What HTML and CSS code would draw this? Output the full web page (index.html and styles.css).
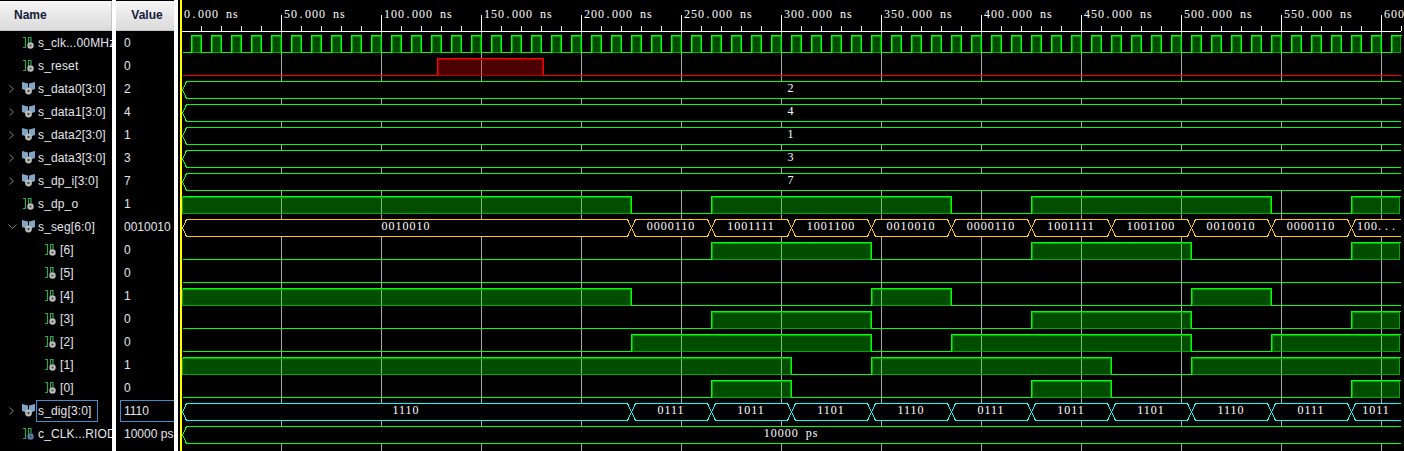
FILE: index.html
```html
<!DOCTYPE html>
<html>
<head>
    <title>Simulation waveform</title>
    <link rel="stylesheet" href="styles.css">
</head>
<body>

<svg class="defs" width="0" height="0">
    <symbol id="ico-bit" viewBox="0 0 12 12">
        <path class="ico-step" d="M0 .5 H2.5 V10.5 H0 M5.5 7 V.5 H8 V5"/>
        <circle class="ico-gear" cx="7.5" cy="8.5" r="3.2"/>
        <circle class="ico-hole" cx="7.5" cy="8.5" r="1.1"/>
    </symbol>
    <symbol id="ico-param" viewBox="0 0 12 12">
        <path class="ico-step" d="M0 .5 H2.5 V10.5 H0 M5.5 7 V.5 H8 V5"/>
        <circle class="ico-gear-blue" cx="7.5" cy="8.5" r="3.2"/>
        <circle class="ico-hole" cx="7.5" cy="8.5" r="1.1"/>
    </symbol>
    <symbol id="ico-bus" viewBox="0 0 13 13">
        <path class="ico-block" d="M0 0 L6 1.5 V9 L0 7 Z M13 0 L7 1.5 V9 L13 7 Z"/>
        <circle class="ico-gear" cx="6.5" cy="9" r="3.4"/>
        <circle class="ico-hole" cx="6.5" cy="9" r="1.2"/>
    </symbol>
    <symbol id="ico-open" viewBox="0 0 8 8"><path class="ico-chev" d="M1.5 .5 L5.5 4 L1.5 7.5"/></symbol>
    <symbol id="ico-close" viewBox="0 0 9 6"><path class="ico-chev" d="M.5 .5 L4.5 4.5 L8.5 .5"/></symbol>
</svg>

<div class="app">
    <div class="col col-names">
        <div class="col-head head-name">Name</div>
        <div class="row"><span class="chev"></span><svg class="ico"><use href="#ico-bit"/></svg><span class="lbl">s_clk...00MHz</span></div>
        <div class="row"><span class="chev"></span><svg class="ico"><use href="#ico-bit"/></svg><span class="lbl">s_reset</span></div>
        <div class="row"><span class="chev"><svg class="chev-r"><use href="#ico-open"/></svg></span><svg class="ico ico-wide"><use href="#ico-bus"/></svg><span class="lbl">s_data0[3:0]</span></div>
        <div class="row"><span class="chev"><svg class="chev-r"><use href="#ico-open"/></svg></span><svg class="ico ico-wide"><use href="#ico-bus"/></svg><span class="lbl">s_data1[3:0]</span></div>
        <div class="row"><span class="chev"><svg class="chev-r"><use href="#ico-open"/></svg></span><svg class="ico ico-wide"><use href="#ico-bus"/></svg><span class="lbl">s_data2[3:0]</span></div>
        <div class="row"><span class="chev"><svg class="chev-r"><use href="#ico-open"/></svg></span><svg class="ico ico-wide"><use href="#ico-bus"/></svg><span class="lbl">s_data3[3:0]</span></div>
        <div class="row"><span class="chev"><svg class="chev-r"><use href="#ico-open"/></svg></span><svg class="ico ico-wide"><use href="#ico-bus"/></svg><span class="lbl">s_dp_i[3:0]</span></div>
        <div class="row"><span class="chev"></span><svg class="ico"><use href="#ico-bit"/></svg><span class="lbl">s_dp_o</span></div>
        <div class="row"><span class="chev"><svg class="chev-d"><use href="#ico-close"/></svg></span><svg class="ico ico-wide"><use href="#ico-bus"/></svg><span class="lbl">s_seg[6:0]</span></div>
        <div class="row child"><span class="chev"></span><svg class="ico"><use href="#ico-bit"/></svg><span class="lbl">[6]</span></div>
        <div class="row child"><span class="chev"></span><svg class="ico"><use href="#ico-bit"/></svg><span class="lbl">[5]</span></div>
        <div class="row child"><span class="chev"></span><svg class="ico"><use href="#ico-bit"/></svg><span class="lbl">[4]</span></div>
        <div class="row child"><span class="chev"></span><svg class="ico"><use href="#ico-bit"/></svg><span class="lbl">[3]</span></div>
        <div class="row child"><span class="chev"></span><svg class="ico"><use href="#ico-bit"/></svg><span class="lbl">[2]</span></div>
        <div class="row child"><span class="chev"></span><svg class="ico"><use href="#ico-bit"/></svg><span class="lbl">[1]</span></div>
        <div class="row child"><span class="chev"></span><svg class="ico"><use href="#ico-bit"/></svg><span class="lbl">[0]</span></div>
        <div class="row"><span class="chev"><svg class="chev-r"><use href="#ico-open"/></svg></span><svg class="ico ico-wide"><use href="#ico-bus"/></svg><span class="lbl selected">s_dig[3:0]</span></div>
        <div class="row"><span class="chev"></span><svg class="ico"><use href="#ico-param"/></svg><span class="lbl">c_CLK...RIOD</span></div>
    </div>

    <div class="col col-values">
        <div class="col-head head-value">Value</div>
        <div class="row val">0</div>
        <div class="row val">0</div>
        <div class="row val">2</div>
        <div class="row val">4</div>
        <div class="row val">1</div>
        <div class="row val">3</div>
        <div class="row val">7</div>
        <div class="row val">1</div>
        <div class="row val">0010010</div>
        <div class="row val">0</div>
        <div class="row val">0</div>
        <div class="row val">1</div>
        <div class="row val">0</div>
        <div class="row val">0</div>
        <div class="row val">1</div>
        <div class="row val">0</div>
        <div class="row val"><span class="val-selected">1110</span></div>
        <div class="row val">10000 ps</div>
    </div>

    <svg class="wave" viewBox="178 0 1226 451" width="1226" height="451">
        <defs>
            <path id="bus-long" d="M1401 .5 H186.5 L182.5 9 L186.5 17.5 H1401"/>
            <g id="bus-hexes">
                <polygon points="182.5,9 186.5,.5 627.5,.5 631.5,9 627.5,17.5 186.5,17.5"/>
                <polygon points="631.5,9 635.5,.5 707.5,.5 711.5,9 707.5,17.5 635.5,17.5"/>
                <polygon points="711.5,9 715.5,.5 787.5,.5 791.5,9 787.5,17.5 715.5,17.5"/>
                <polygon points="791.5,9 795.5,.5 867.5,.5 871.5,9 867.5,17.5 795.5,17.5"/>
                <polygon points="871.5,9 875.5,.5 947.5,.5 951.5,9 947.5,17.5 875.5,17.5"/>
                <polygon points="951.5,9 955.5,.5 1027.5,.5 1031.5,9 1027.5,17.5 955.5,17.5"/>
                <polygon points="1031.5,9 1035.5,.5 1107.5,.5 1111.5,9 1107.5,17.5 1035.5,17.5"/>
                <polygon points="1111.5,9 1115.5,.5 1187.5,.5 1191.5,9 1187.5,17.5 1115.5,17.5"/>
                <polygon points="1191.5,9 1195.5,.5 1267.5,.5 1271.5,9 1267.5,17.5 1195.5,17.5"/>
                <polygon points="1271.5,9 1275.5,.5 1347.5,.5 1351.5,9 1347.5,17.5 1275.5,17.5"/>
                <path d="M1401 .5 H1355.5 L1351.5 9 L1355.5 17.5 H1401"/>
            </g>
        </defs>

        <!-- grid -->
        <path class="grid" d="M281.5 31 V451 M381.5 31 V451 M481.5 31 V451 M581.5 31 V451 M681.5 31 V451 M781.5 31 V451 M881.5 31 V451 M981.5 31 V451 M1081.5 31 V451 M1181.5 31 V451 M1281.5 31 V451 M1381.5 31 V451"/>

        <!-- time axis -->
        <path class="axis" d="M182 31.5 H1401 M281.5 15 V31 M381.5 15 V31 M481.5 15 V31 M581.5 15 V31 M681.5 15 V31 M781.5 15 V31 M881.5 15 V31 M981.5 15 V31 M1081.5 15 V31 M1181.5 15 V31 M1281.5 15 V31 M1381.5 15 V31"/>
        <path class="axis" d="M201.5 26 V31 M221.5 26 V31 M241.5 26 V31 M261.5 26 V31 M301.5 26 V31 M321.5 26 V31 M341.5 26 V31 M361.5 26 V31 M401.5 26 V31 M421.5 26 V31 M441.5 26 V31 M461.5 26 V31 M501.5 26 V31 M521.5 26 V31 M541.5 26 V31 M561.5 26 V31 M601.5 26 V31 M621.5 26 V31 M641.5 26 V31 M661.5 26 V31 M701.5 26 V31 M721.5 26 V31 M741.5 26 V31 M761.5 26 V31 M801.5 26 V31 M821.5 26 V31 M841.5 26 V31 M861.5 26 V31 M901.5 26 V31 M921.5 26 V31 M941.5 26 V31 M961.5 26 V31 M1001.5 26 V31 M1021.5 26 V31 M1041.5 26 V31 M1061.5 26 V31 M1101.5 26 V31 M1121.5 26 V31 M1141.5 26 V31 M1161.5 26 V31 M1201.5 26 V31 M1221.5 26 V31 M1241.5 26 V31 M1261.5 26 V31 M1301.5 26 V31 M1321.5 26 V31 M1341.5 26 V31 M1361.5 26 V31 M1401.5 26 V31"/>
        <g class="time">
            <text x="184" y="18">0<tspan class="dot" dx="1.5">.</tspan>000 ns</text>
            <text x="284" y="18">50<tspan class="dot" dx="1.5">.</tspan>000 ns</text>
            <text x="384" y="18">100<tspan class="dot" dx="1.5">.</tspan>000 ns</text>
            <text x="484" y="18">150<tspan class="dot" dx="1.5">.</tspan>000 ns</text>
            <text x="584" y="18">200<tspan class="dot" dx="1.5">.</tspan>000 ns</text>
            <text x="684" y="18">250<tspan class="dot" dx="1.5">.</tspan>000 ns</text>
            <text x="784" y="18">300<tspan class="dot" dx="1.5">.</tspan>000 ns</text>
            <text x="884" y="18">350<tspan class="dot" dx="1.5">.</tspan>000 ns</text>
            <text x="984" y="18">400<tspan class="dot" dx="1.5">.</tspan>000 ns</text>
            <text x="1084" y="18">450<tspan class="dot" dx="1.5">.</tspan>000 ns</text>
            <text x="1184" y="18">500<tspan class="dot" dx="1.5">.</tspan>000 ns</text>
            <text x="1284" y="18">550<tspan class="dot" dx="1.5">.</tspan>000 ns</text>
            <text x="1384" y="18">600<tspan class="dot" dx="1.5">.</tspan>000 ns</text>
        </g>

        <!-- s_clk -->
        <path class="high" d="M192.5 36.5 h8 v16 h-8 z
            m20 0 h8 v16 h-8 z m20 0 h8 v16 h-8 z m20 0 h8 v16 h-8 z m20 0 h8 v16 h-8 z m20 0 h8 v16 h-8 z
            m20 0 h8 v16 h-8 z m20 0 h8 v16 h-8 z m20 0 h8 v16 h-8 z m20 0 h8 v16 h-8 z m20 0 h8 v16 h-8 z
            m20 0 h8 v16 h-8 z m20 0 h8 v16 h-8 z m20 0 h8 v16 h-8 z m20 0 h8 v16 h-8 z m20 0 h8 v16 h-8 z
            m20 0 h8 v16 h-8 z m20 0 h8 v16 h-8 z m20 0 h8 v16 h-8 z m20 0 h8 v16 h-8 z m20 0 h8 v16 h-8 z
            m20 0 h8 v16 h-8 z m20 0 h8 v16 h-8 z m20 0 h8 v16 h-8 z m20 0 h8 v16 h-8 z m20 0 h8 v16 h-8 z
            m20 0 h8 v16 h-8 z m20 0 h8 v16 h-8 z m20 0 h8 v16 h-8 z m20 0 h8 v16 h-8 z m20 0 h8 v16 h-8 z
            m20 0 h8 v16 h-8 z m20 0 h8 v16 h-8 z m20 0 h8 v16 h-8 z m20 0 h8 v16 h-8 z m20 0 h8 v16 h-8 z
            m20 0 h8 v16 h-8 z m20 0 h8 v16 h-8 z m20 0 h8 v16 h-8 z m20 0 h8 v16 h-8 z m20 0 h8 v16 h-8 z
            m20 0 h8 v16 h-8 z m20 0 h8 v16 h-8 z m20 0 h8 v16 h-8 z m20 0 h8 v16 h-8 z m20 0 h8 v16 h-8 z
            m20 0 h8 v16 h-8 z m20 0 h8 v16 h-8 z m20 0 h8 v16 h-8 z m20 0 h8 v16 h-8 z m20 0 h8 v16 h-8 z
            m20 0 h8 v16 h-8 z m20 0 h8 v16 h-8 z m20 0 h8 v16 h-8 z m20 0 h8 v16 h-8 z m20 0 h8 v16 h-8 z
            m20 0 h8 v16 h-8 z m20 0 h8 v16 h-8 z m20 0 h8 v16 h-8 z m20 0 h8 v16 h-8 z m20 0 h8 v16 h-8 z"/>
        <path class="line" d="M182.5 52.5 h9
            v-17 h10 v17 h10 v-17 h10 v17 h10 v-17 h10 v17 h10 v-17 h10 v17 h10 v-17 h10 v17 h10
            v-17 h10 v17 h10 v-17 h10 v17 h10 v-17 h10 v17 h10 v-17 h10 v17 h10 v-17 h10 v17 h10
            v-17 h10 v17 h10 v-17 h10 v17 h10 v-17 h10 v17 h10 v-17 h10 v17 h10 v-17 h10 v17 h10
            v-17 h10 v17 h10 v-17 h10 v17 h10 v-17 h10 v17 h10 v-17 h10 v17 h10 v-17 h10 v17 h10
            v-17 h10 v17 h10 v-17 h10 v17 h10 v-17 h10 v17 h10 v-17 h10 v17 h10 v-17 h10 v17 h10
            v-17 h10 v17 h10 v-17 h10 v17 h10 v-17 h10 v17 h10 v-17 h10 v17 h10 v-17 h10 v17 h10
            v-17 h10 v17 h10 v-17 h10 v17 h10 v-17 h10 v17 h10 v-17 h10 v17 h10 v-17 h10 v17 h10
            v-17 h10 v17 h10 v-17 h10 v17 h10 v-17 h10 v17 h10 v-17 h10 v17 h10 v-17 h10 v17 h10
            v-17 h10 v17 h10 v-17 h10 v17 h10 v-17 h10 v17 h10 v-17 h10 v17 h10 v-17 h10 v17 h10
            v-17 h10 v17 h10 v-17 h10 v17 h10 v-17 h10 v17 h10 v-17 h10 v17 h10 v-17 h10 v17 h10
            v-17 h10 v17 h10 v-17 h10 v17 h10 v-17 h10 v17 h10 v-17 h10 v17 h10 v-17 h10 v17 h10
            v-17 h10 v17 h10 v-17 h10 v17 h10 v-17 h10 v17 h10 v-17 h10 v17 h10 v-17 h10 v17 h10
            v-17 h10"/>

        <!-- s_reset -->
        <g class="red" transform="translate(0,58)">
            <rect class="high" x="438.5" y="1.5" width="104" height="16"/>
            <path class="line" d="M182.5 17.5 H437.5 V.5 H543.5 V17.5 H1401"/>
        </g>

        <!-- constant buses -->
        <g class="bus" transform="translate(0,81)"><use href="#bus-long"/><text x="791" y="11">2</text></g>
        <g class="bus" transform="translate(0,104)"><use href="#bus-long"/><text x="791" y="11">4</text></g>
        <g class="bus" transform="translate(0,127)"><use href="#bus-long"/><text x="791" y="11">1</text></g>
        <g class="bus" transform="translate(0,150)"><use href="#bus-long"/><text x="791" y="11">3</text></g>
        <g class="bus" transform="translate(0,173)"><use href="#bus-long"/><text x="791" y="11">7</text></g>

        <!-- s_dp_o -->
        <g transform="translate(0,196)">
            <rect class="high" x="182.5" y="1.5" width="448" height="16"/>
            <rect class="high" x="712.5" y="1.5" width="238" height="16"/>
            <rect class="high" x="1032.5" y="1.5" width="238" height="16"/>
            <rect class="high" x="1352.5" y="1.5" width="47" height="16"/>
            <path class="line" d="M182.5 .5 H631.5 V17.5 H711.5 V.5 H951.5 V17.5 H1031.5 V.5 H1271.5 V17.5 H1351.5 V.5 H1401"/>
        </g>

        <!-- s_seg -->
        <g class="bus bus-seg" transform="translate(0,219)">
            <use href="#bus-hexes"/>
            <text x="406" y="11">0010010</text>
            <text x="671" y="11">0000110</text>
            <text x="751" y="11">1001111</text>
            <text x="831" y="11">1001100</text>
            <text x="911" y="11">0010010</text>
            <text x="991" y="11">0000110</text>
            <text x="1071" y="11">1001111</text>
            <text x="1151" y="11">1001100</text>
            <text x="1231" y="11">0010010</text>
            <text x="1311" y="11">0000110</text>
            <text x="1378" y="11">100<tspan class="dot">...</tspan></text>
        </g>

        <!-- s_seg bits -->
        <g transform="translate(0,242)">
            <rect class="high" x="712.5" y="1.5" width="158" height="16"/>
            <rect class="high" x="1032.5" y="1.5" width="158" height="16"/>
            <rect class="high" x="1352.5" y="1.5" width="47" height="16"/>
            <path class="line" d="M182.5 17.5 H711.5 V.5 H871.5 V17.5 H1031.5 V.5 H1191.5 V17.5 H1351.5 V.5 H1401"/>
        </g>
        <g transform="translate(0,265)">
            <path class="line" d="M182.5 17.5 H1401"/>
        </g>
        <g transform="translate(0,288)">
            <rect class="high" x="182.5" y="1.5" width="448" height="16"/>
            <rect class="high" x="872.5" y="1.5" width="78" height="16"/>
            <rect class="high" x="1192.5" y="1.5" width="78" height="16"/>
            <path class="line" d="M182.5 .5 H631.5 V17.5 H871.5 V.5 H951.5 V17.5 H1191.5 V.5 H1271.5 V17.5 H1401"/>
        </g>
        <g transform="translate(0,311)">
            <rect class="high" x="712.5" y="1.5" width="158" height="16"/>
            <rect class="high" x="1032.5" y="1.5" width="158" height="16"/>
            <rect class="high" x="1352.5" y="1.5" width="47" height="16"/>
            <path class="line" d="M182.5 17.5 H711.5 V.5 H871.5 V17.5 H1031.5 V.5 H1191.5 V17.5 H1351.5 V.5 H1401"/>
        </g>
        <g transform="translate(0,334)">
            <rect class="high" x="632.5" y="1.5" width="238" height="16"/>
            <rect class="high" x="952.5" y="1.5" width="238" height="16"/>
            <rect class="high" x="1272.5" y="1.5" width="127" height="16"/>
            <path class="line" d="M182.5 17.5 H631.5 V.5 H871.5 V17.5 H951.5 V.5 H1191.5 V17.5 H1271.5 V.5 H1401"/>
        </g>
        <g transform="translate(0,357)">
            <rect class="high" x="182.5" y="1.5" width="608" height="16"/>
            <rect class="high" x="872.5" y="1.5" width="238" height="16"/>
            <rect class="high" x="1192.5" y="1.5" width="207" height="16"/>
            <path class="line" d="M182.5 .5 H791.5 V17.5 H871.5 V.5 H1111.5 V17.5 H1191.5 V.5 H1401"/>
        </g>
        <g transform="translate(0,380)">
            <rect class="high" x="712.5" y="1.5" width="78" height="16"/>
            <rect class="high" x="1032.5" y="1.5" width="78" height="16"/>
            <rect class="high" x="1352.5" y="1.5" width="47" height="16"/>
            <path class="line" d="M182.5 17.5 H711.5 V.5 H791.5 V17.5 H1031.5 V.5 H1111.5 V17.5 H1351.5 V.5 H1401"/>
        </g>

        <!-- s_dig -->
        <g class="bus bus-dig" transform="translate(0,403)">
            <use href="#bus-hexes"/>
            <text x="406" y="11">1110</text>
            <text x="671" y="11">0111</text>
            <text x="751" y="11">1011</text>
            <text x="831" y="11">1101</text>
            <text x="911" y="11">1110</text>
            <text x="991" y="11">0111</text>
            <text x="1071" y="11">1011</text>
            <text x="1151" y="11">1101</text>
            <text x="1231" y="11">1110</text>
            <text x="1311" y="11">0111</text>
            <text x="1376" y="11">1011</text>
        </g>

        <!-- c_CLK_PERIOD -->
        <g class="bus" transform="translate(0,426)"><use href="#bus-long"/><text x="791" y="11">10000 ps</text></g>

        <!-- cursor -->
        <rect class="cursor" x="180" y="0" width="2" height="451"/>
    </svg>
</div>

</body>
</html>
```

FILE: styles.css
```css
html, body {
    margin: 0;
    padding: 0;
    background: #000;
    overflow: hidden;
}
.defs {
    position: absolute;
}
.app {
    display: flex;
    height: 451px;
    font: normal 12px "Liberation Sans", Arial, sans-serif;
    color: #e4e6ee;
}
.col {
    background: #000;
    border-right: 4px solid #fff;
    overflow: hidden;
    flex: none;
}
.col-names {
    width: 112px;
}
.col-values {
    width: 58px;
}
.col-head {
    height: 29px;
    margin: 1px 0 0 0;
    line-height: 29px;
    font-weight: bold;
    color: #16203a;
    background: linear-gradient(#f6f6f6, #e6e6e6 55%, #dcdcdc);
    border-bottom: 1px solid #c4c4c4;
}
.head-name {
    padding-left: 14px;
    border-right: 1px solid #c4c4c4;
}
.head-value {
    text-align: center;
    padding-left: 4px;
}
.row {
    display: flex;
    align-items: center;
    height: 23px;
    padding-left: 8px;
    white-space: nowrap;
}
.row.child {
    padding-left: 30px;
}
.chev {
    display: flex;
    align-items: center;
    width: 15px;
    flex: none;
}
.chev-r {
    width: 8px;
    height: 8px;
}
.chev-d {
    width: 9px;
    height: 6px;
}
.ico {
    width: 12px;
    height: 12px;
    flex: none;
    margin-right: 1px;
}
.ico-wide {
    width: 13px;
    height: 13px;
    margin-left: -1px;
}
.ico-step {
    fill: none;
    stroke: #2fa652;
    stroke-width: 1.2;
}
.ico-gear {
    fill: #bcbebe;
}
.ico-gear-blue {
    fill: #5a7aa8;
}
.ico-hole {
    fill: #4a4a4a;
}
.ico-block {
    fill: #7ea6c6;
}
.ico-chev {
    fill: none;
    stroke: #808080;
}
.lbl {
    padding: 0 5px 0 1px;
    border: 1px solid transparent;
    height: 20px;
    line-height: 20px;
    letter-spacing: .15px;
}
.lbl.selected {
    border-color: #3a8fd0;
}
.val {
    padding-left: 8px;
}
.val-selected {
    display: block;
    border: 1px solid #3a8fd0;
    border-right: none;
    height: 20px;
    line-height: 20px;
    width: 100%;
    margin-left: -4px;
    padding-left: 3px;
}
.wave {
    flex: none;
    display: block;
    shape-rendering: crispEdges;
}
.grid {
    fill: none;
    stroke: #a8a8a8;
}
.axis {
    fill: none;
    stroke: #fff;
}
.time text, .bus text {
    font: normal 12px "Liberation Serif", "Times New Roman", serif;
    letter-spacing: 1px;
    word-spacing: 3px;
    fill: #fff;
    stroke: none;
}
.bus text {
    text-anchor: middle;
}
.time .dot {
    letter-spacing: 2.5px;
}
.bus .dot {
    letter-spacing: 4px;
}
.high {
    fill: rgba(0, 255, 0, 0.3);
    stroke: #00a800;
}
.line {
    fill: none;
    stroke: #00ff00;
}
.red .high {
    fill: rgba(255, 0, 0, 0.3);
    stroke: #a00000;
}
.red .line {
    stroke: #ff0000;
}
.bus {
    fill: #000;
    stroke: #00ff00;
}
.bus-seg {
    stroke: #ffc800;
}
.bus-dig {
    stroke: #00ffff;
}
.cursor {
    fill: #ffff00;
}
```
